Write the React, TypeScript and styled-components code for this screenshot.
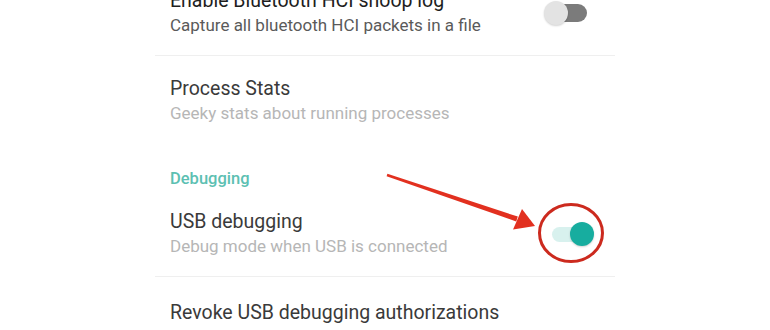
import React from "react";
import styled, { createGlobalStyle } from "styled-components";

const GlobalStyle = createGlobalStyle`
  html, body {
    margin: 0;
    padding: 0;
    background: #ffffff;
    overflow: hidden;
  }
  body {
    font-family: Roboto, "Noto Sans", Arial, sans-serif;
  }
`;

const App = () => {
  return (
    <Page>
      <GlobalStyle />
      <List>
        <Row $divider>
          <Texts>
            <Title $strong>Enable Bluetooth HCI snoop log</Title>
            <Summary $dark>Capture all bluetooth HCI packets in a file</Summary>
          </Texts>
          <Switch>
            <Track $on={false} />
            <Thumb $on={false} />
          </Switch>
        </Row>
        <Row>
          <Texts>
            <Title>Process Stats</Title>
            <Summary>Geeky stats about running processes</Summary>
          </Texts>
        </Row>
        <Category>Debugging</Category>
        <Row $divider>
          <Texts>
            <Title>USB debugging</Title>
            <Summary>Debug mode when USB is connected</Summary>
          </Texts>
          <Switch>
            <Track $on />
            <Thumb $on />
          </Switch>
        </Row>
        <Row $top={23}>
          <Texts>
            <Title>Revoke USB debugging authorizations</Title>
          </Texts>
        </Row>
      </List>
      <Annotation viewBox="0 0 770 330" width="770" height="330">
        {/* arrow pointing at the USB debugging switch */}
        <polygon
          points="387.4,173.8 517.8,216.6 516.2,221.4 386.6,176.2"
          fill="#e2301f"
        />
        <polygon points="535,226 522,209 513,229.5" fill="#e2301f" />
        <ellipse
          cx="571"
          cy="233"
          rx="31.5"
          ry="28.5"
          fill="none"
          stroke="#cc2a1e"
          strokeWidth="3"
        />
      </Annotation>
    </Page>
  );
};

export default App;

const Page = styled.div`
  position: relative;
  width: 770px;
  height: 330px;
  overflow: hidden;
  background: #ffffff;
`;

const List = styled.div`
  margin-left: 155px;
  margin-top: -32px;
  width: 460px;
  display: flex;
  flex-direction: column;
`;

const Row = styled.div<{ $divider?: boolean; $top?: number }>`
  display: flex;
  align-items: center;
  justify-content: space-between;
  padding: ${(p) => p.$top ?? 20}px 21px 18px 15px;
  border-bottom: 1px solid ${(p) => (p.$divider ? "#efefef" : "transparent")};
`;

const Texts = styled.div`
  display: flex;
  flex-direction: column;
`;

const Title = styled.div<{ $strong?: boolean }>`
  font-size: 19.5px;
  line-height: 25px;
  color: ${(p) => (p.$strong ? "#1e1e1e" : "#3a3a3a")};
`;

const Summary = styled.div<{ $dark?: boolean }>`
  font-size: 17px;
  line-height: 24px;
  color: ${(p) => (p.$dark ? "#5a5a5a" : "#b6b6b6")};
`;

const Category = styled.div`
  padding: 25px 15px 0;
  font-size: 16.5px;
  line-height: 20px;
  font-weight: 500;
  color: #5cc0b2;
`;

const Switch = styled.div`
  position: relative;
  width: 50px;
  height: 26px;
  flex-shrink: 0;
`;

const Track = styled.div<{ $on: boolean }>`
  position: absolute;
  left: ${(p) => (p.$on ? 8 : 6)}px;
  right: ${(p) => (p.$on ? 2 : 7)}px;
  top: ${(p) => (p.$on ? 6 : 4)}px;
  height: ${(p) => (p.$on ? 15 : 18)}px;
  border-radius: 9px;
  background: ${(p) => (p.$on ? "#d8f1ee" : "#7b7b7b")};
`;

const Thumb = styled.div<{ $on: boolean }>`
  position: absolute;
  top: 1px;
  left: ${(p) => (p.$on ? 26 : 0)}px;
  width: 24px;
  height: 24px;
  border-radius: 50%;
  background: ${(p) => (p.$on ? "#17ad9f" : "#e3e3e3")};
  box-shadow: 0 1px 2px rgba(0, 0, 0, 0.18);
`;

const Annotation = styled.svg`
  position: absolute;
  left: 0;
  top: 0;
  pointer-events: none;
`;
